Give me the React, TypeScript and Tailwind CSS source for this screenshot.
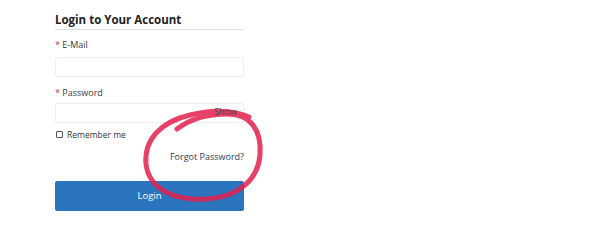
import React from "react";

export default function App() {
  return (
    <div className="relative w-[600px] h-[227px] bg-white overflow-hidden" style={{fontFamily: '"Open Sans", "Liberation Sans", sans-serif'}}>
      <div className="w-[189px] ml-[55px] pt-[13px]">
        <h1 className="text-[11.5px] leading-[14px] font-bold text-[#222] pb-[2px] border-b border-[#dedede]">
          Login to Your Account
        </h1>
        <label className="block mt-[8.5px] text-[9px] leading-[12px] text-[#3a3a3a]">
          <span className="text-[#c8324a]">*</span> E-Mail
        </label>
        <input type="text" className="block w-full h-[20px] mt-[6.5px] border border-[#eeeeee] rounded-[2px] outline-none" />
        <label className="block mt-[9.5px] text-[9px] leading-[12px] text-[#3a3a3a]">
          <span className="text-[#c8324a]">*</span> Password
        </label>
        <div className="relative mt-[4.5px]">
          <input type="password" className="block w-full h-[20px] border border-[#eeeeee] rounded-[2px] outline-none" />
          <span className="absolute z-10 right-[7px] top-[3px] text-[9px] leading-[12px] text-[#444]">Show</span>
        </div>
        <label className="flex items-center gap-[4px] mt-[5.5px] text-[8.5px] leading-[12px] text-[#333]">
          <span className="inline-block w-[7px] h-[7px] ml-[1px] border border-[#555] rounded-[1px]"></span>
          Remember me
        </label>
        <div className="flex justify-end mt-[10.5px]">
          <a className="text-[9px] leading-[12px] text-[#2a3b5e]">Forgot Password?</a>
        </div>
        <button className="block w-full h-[30px] mt-[18px] bg-[#2b74be] rounded-[2px] text-white text-[9.5px]">
          Login
        </button>
      </div>
      <svg className="absolute left-0 top-0 pointer-events-none" width="600" height="227" viewBox="0 0 600 227">
        <path
          d="M177 129 C 190 119, 207 114, 228 114 C 250 114, 262 130, 260 155 C 258 180, 238 197, 207 199 C 176 201, 149 190, 146 164 C 144 140, 160 122, 190 115 C 210 110, 232 110, 249 117"
          fill="none"
          stroke="#e3204d"
          strokeOpacity="0.85"
          strokeWidth="5"
          strokeLinecap="round"
        />
      </svg>
    </div>
  );
}
